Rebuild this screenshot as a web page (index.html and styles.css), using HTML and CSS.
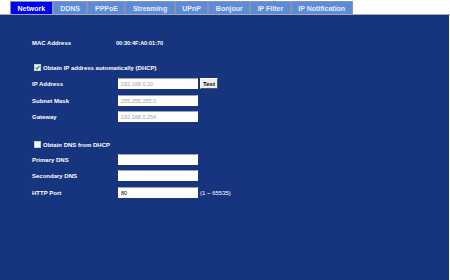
FILE: index.html
```html
<html>
<head>
<title>Network</title>
<link rel="stylesheet" href="styles.css">
</head>
<body>
<div class="tabs">
  <a class="tab active">Network</a>
  <a class="tab">DDNS</a>
  <a class="tab">PPPoE</a>
  <a class="tab">Streaming</a>
  <a class="tab">UPnP</a>
  <a class="tab">Bonjour</a>
  <a class="tab">IP Filter</a>
  <a class="tab">IP Notification</a>
</div>

<div class="panel">
  <div class="row mac">
    <span class="label">MAC Address</span>
    <span class="value">00:30:4F:A0:01:70</span>
  </div>

  <div class="row check dhcp">
    <span class="box"><svg width="5" height="5" viewBox="0 0 5 5"><path d="M0.6 2.6 L2 4 L4.5 0.8" fill="none" stroke="#2a9a2a" stroke-width="1.3"/></svg></span>
    <span>Obtain IP address automatically (DHCP)</span>
  </div>

  <div class="row field ip">
    <span class="label">IP Address</span>
    <span class="input disabled">192.168.0.20</span>
    <span class="btn">Test</span>
  </div>
  <div class="row field subnet">
    <span class="label">Subnet Mask</span>
    <span class="input disabled">255.255.255.0</span>
  </div>
  <div class="row field gateway">
    <span class="label">Gateway</span>
    <span class="input disabled">192.168.0.254</span>
  </div>

  <div class="row check dns">
    <span class="box"></span>
    <span>Obtain DNS from DHCP</span>
  </div>

  <div class="row field primary">
    <span class="label">Primary DNS</span>
    <span class="input"></span>
  </div>
  <div class="row field secondary">
    <span class="label">Secondary DNS</span>
    <span class="input"></span>
  </div>
  <div class="row field port">
    <span class="label">HTTP Port</span>
    <span class="input dark">80</span>
    <span class="hint">(1 ~ 65535)</span>
  </div>
</div>
</body>
</html>
```

FILE: styles.css
```css
  body {
    margin: 0;
    background-color: #ffffff;
    font-family: "Liberation Sans", Arial, sans-serif;
  }

  .tabs {
    display: flex;
    padding: 1px 0 0 10px;
    height: 13px;
    border-bottom: 1px solid #a3a9b8;
  }

  .tab {
    display: flex;
    align-items: center;
    padding: 0 6.5px;
    background-color: #5d8bd6;
    border: 1px solid #8793ab;
    border-bottom: none;
    color: #e6ecf8;
    font-size: 7px;
    font-weight: bold;
    white-space: nowrap;
  }

  .tab.active {
    background-color: #0000f0;
    color: #ffffff;
  }

  .panel {
    width: 449px;
    height: 265px;
    box-sizing: border-box;
    background-color: #17357f;
    padding: 22px 0 0 32px;
    color: #ffffff;
    font-size: 6px;
    font-weight: bold;
  }

  .row {
    display: flex;
    align-items: center;
    height: 11px;
  }

  .label {
    width: 84px;
    flex: none;
  }

  .value {
    font-size: 5.5px;
  }

  .dhcp { margin-top: 14px; }
  .ip { margin-top: 5px; }
  .subnet { margin-top: 6px; }
  .gateway { margin-top: 5px; }
  .dns { margin-top: 17px; }
  .primary { margin-top: 4px; }
  .secondary { margin-top: 5px; }
  .port { margin-top: 6px; }

  .field .label {
    width: 86px;
  }

  .check {
    padding-left: 2px;
    gap: 2px;
  }

  .box {
    display: flex;
    align-items: center;
    justify-content: center;
    width: 5px;
    height: 5px;
    background-color: #ffffff;
    border: 1px solid #c8ccd4;
  }

  .input {
    display: flex;
    align-items: center;
    box-sizing: border-box;
    width: 80px;
    height: 11px;
    padding-left: 2px;
    background-color: #ffffff;
    border: 1px solid #ffffff;
    border-top-color: #9aa3b5;
    color: #000000;
    font-size: 5.5px;
    font-weight: normal;
  }

  .input.disabled {
    color: #a3a3a3;
  }

  .btn {
    display: flex;
    align-items: center;
    justify-content: center;
    box-sizing: border-box;
    width: 18px;
    height: 11px;
    margin-left: 2px;
    background-color: #efefef;
    border: 1px solid #4a5570;
    border-top-color: #ffffff;
    border-left-color: #ffffff;
    color: #000000;
  }

  .hint {
    margin-left: 2px;
    font-weight: normal;
  }
```
